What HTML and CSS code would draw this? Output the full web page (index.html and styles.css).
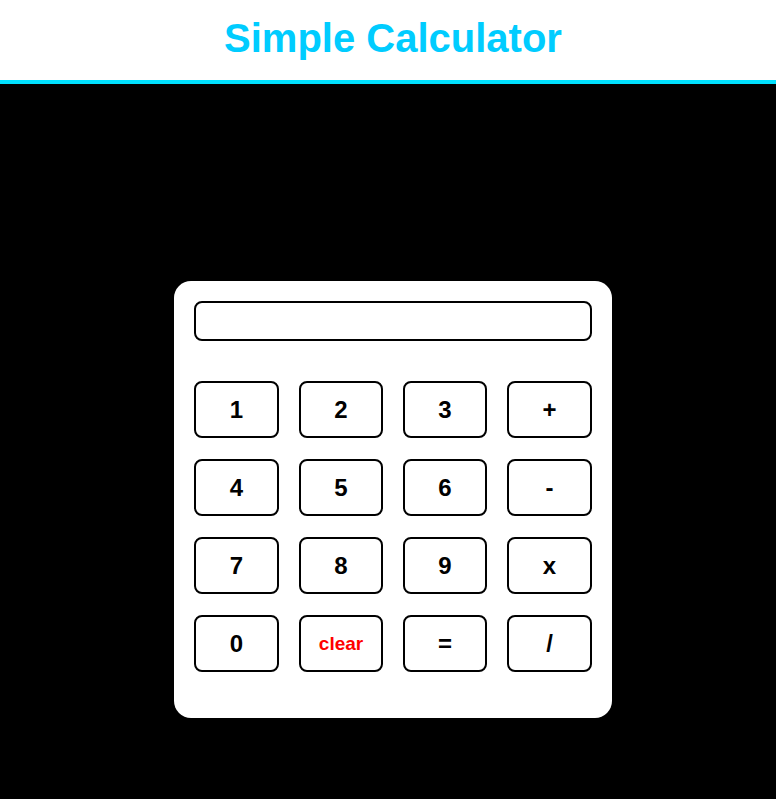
FILE: index.html
```html
<!DOCTYPE html>
<html>
<head>
<meta charset="utf-8">
<link rel="stylesheet" href="styles.css">
</head>
<body>
<header class="header"><h1 class="title">Simple Calculator</h1></header>
<main class="main">
  <div class="calc">
    <input class="display" type="text" readonly>
    <div class="keys">
      <button class="key">1</button>
      <button class="key">2</button>
      <button class="key">3</button>
      <button class="key">+</button>
      <button class="key">4</button>
      <button class="key">5</button>
      <button class="key">6</button>
      <button class="key">-</button>
      <button class="key">7</button>
      <button class="key">8</button>
      <button class="key">9</button>
      <button class="key">x</button>
      <button class="key">0</button>
      <button class="key clear">clear</button>
      <button class="key">=</button>
      <button class="key">/</button>
    </div>
  </div>
</main>
</body>
</html>
```
FILE: styles.css
```css
* { box-sizing: border-box; }
html, body { margin: 0; padding: 0; }
body {
  background: #000;
  font-family: "Liberation Sans", Arial, sans-serif;
  min-height: 799px;
}
.header {
  background: #fff;
  height: 84px;
  border-bottom: 4px solid #00e1ff;
  display: flex;
  justify-content: center;
  padding-left: 10px;
}
.title {
  margin: 0;
  padding-top: 15px;
  font-size: 40px;
  line-height: 46px;
  font-weight: bold;
  color: #00ccff;
}
.main {
  display: flex;
  justify-content: center;
  padding-left: 10px;
  padding-top: 197px;
}
.calc {
  width: 438px;
  height: 437px;
  background: #fff;
  border-radius: 17px;
  padding: 20px 20px 0 20px;
}
.display {
  display: block;
  width: 398px;
  height: 40px;
  border: 2px solid #000;
  border-radius: 8px;
  background: #fff;
  outline: none;
  margin: 0;
}
.keys {
  margin-top: 40px;
  display: grid;
  grid-template-columns: 85px 84px 84px 85px;
  column-gap: 20px;
  row-gap: 21px;
}
.key {
  height: 57px;
  border: 2px solid #000;
  border-radius: 8px;
  background: #fff;
  font-family: "Liberation Sans", Arial, sans-serif;
  font-size: 24px;
  font-weight: bold;
  color: #000;
  padding: 0;
}
.key.clear {
  color: #ff0000;
  font-size: 19px;
}
```
